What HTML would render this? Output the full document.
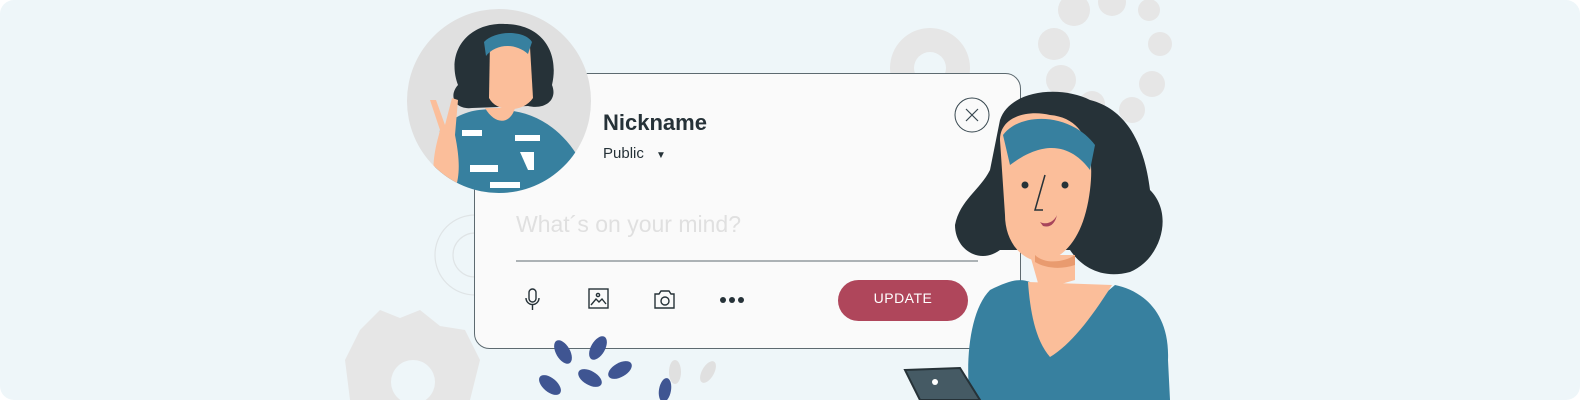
<!DOCTYPE html>
<html><head><meta charset="utf-8"><style>
html,body{margin:0;padding:0;background:#fff;}
.wrap{position:relative;width:1580px;height:400px;overflow:hidden;}
svg{position:absolute;left:0;top:0}
.t{position:absolute;font-family:"Liberation Sans",sans-serif;}
</style></head><body><div class="wrap">
<svg width="1580" height="400" viewBox="0 0 1580 400">
<rect x="0" y="0" width="1580" height="400" rx="14" fill="#eef6f9"/>
<g fill="#e6e6e6">
<circle cx="1074" cy="10" r="16"/><circle cx="1112" cy="2" r="14"/><circle cx="1149" cy="10" r="11"/>
<circle cx="1054" cy="44" r="16"/><circle cx="1160" cy="44" r="12"/>
<circle cx="1061" cy="80" r="15"/><circle cx="1152" cy="84" r="13"/>
<circle cx="1092" cy="104" r="13"/><circle cx="1132" cy="110" r="13"/>
</g>
<g fill="#e6e6e6">
<circle cx="930" cy="68" r="40"/>
<path d="M360 330 L380 310 L400 318 L420 310 L440 326 L465 330 L480 360 L470 400 L350 400 L345 360Z"/>
</g>
<circle cx="930" cy="68" r="16" fill="#eef6f9"/>
<circle cx="413" cy="382" r="22" fill="#eef6f9"/>
<g fill="none" stroke="#dfe4e6" stroke-width="1.2"><circle cx="475" cy="255" r="40"/><circle cx="475" cy="255" r="22"/></g>
<rect x="474.5" y="73.5" width="546" height="275" rx="15" fill="#fafafa" stroke="#5d6a70" stroke-width="1"/>
<line x1="516" y1="261" x2="978" y2="261" stroke="#5d6a70" stroke-width="1"/>
<circle cx="972" cy="115" r="17" fill="none" stroke="#37474f" stroke-width="1"/>
<path d="M966 109l12 12M978 109l-12 12" stroke="#37474f" stroke-width="1.2"/>
<rect x="838" y="280" width="130" height="41" rx="20.5" fill="#af465b"/>
<g fill="none" stroke="#263238" stroke-width="1.4">
<rect x="529" y="289" width="7" height="13" rx="3.5"/><path d="M526 298a6.5 6.5 0 0 0 13 0M532.5 305v5"/>
<rect x="589" y="289" width="19" height="19"/><path d="M591 305l5-6 3 3 3-3 4 5"/><circle cx="598" cy="295" r="1.6"/>
<path d="M655 294h4l2-3h8l2 3h3v14h-19z"/><circle cx="665" cy="301" r="4"/>
</g>
<g fill="#263238"><circle cx="723" cy="300" r="3"/><circle cx="732" cy="300" r="3"/><circle cx="741" cy="300" r="3"/></g>
<circle cx="499" cy="101" r="92" fill="#e0e0e0"/>
<clipPath id="c"><circle cx="499" cy="101" r="92"/></clipPath>
<g clip-path="url(#c)">
<path d="M458 85 C445 50 470 22 505 24 C540 24 560 50 552 85 C558 100 545 110 528 106 L472 108 C455 110 448 96 458 85Z" fill="#263238"/>
<path d="M490 42 C497 32 525 32 530 47 L533 98 C523 113 497 113 489 98Z" fill="#fbbe9a"/>
<path d="M484 42 C495 30 525 30 532 42 L528 54 C515 42 495 44 486 56Z" fill="#37809f"/>
<path d="M440 130 C460 110 480 108 500 110 C530 110 560 125 580 160 L590 200 L430 200Z" fill="#37809f"/>
<path d="M485 108 L515 108 C510 125 495 125 485 108Z" fill="#fbbe9a"/>
<path d="M430 100 L436 100 L445 125 L452 98 L458 100 L455 135 C460 160 460 175 455 190 L435 190 C430 160 438 140 440 130Z" fill="#fbbe9a"/>
<g fill="#fff"><path d="M462 130h20v6h-20z"/><path d="M515 135h25v6h-25z"/><path d="M470 165h28v7h-28z"/><path d="M520 152h14v18h-6z"/><path d="M490 182h30v6h-30z"/></g>
</g>
<path d="M1000 120 C1010 90 1060 85 1090 100 C1130 110 1145 150 1150 190 C1175 215 1160 260 1130 272 C1100 280 1080 265 1070 250 L1000 250 C980 265 955 250 955 225 C960 200 980 190 990 170Z" fill="#263238"/>
<path d="M1000 140 C1000 115 1030 110 1050 115 C1085 118 1095 150 1090 190 C1085 230 1070 255 1045 262 C1020 262 1005 240 1005 215Z" fill="#fbbe9a"/>
<path d="M1003 135 C1020 112 1070 112 1095 145 L1090 170 C1075 150 1050 135 1010 165Z" fill="#37809f"/>
<path d="M1030 255 L1075 255 L1075 280 L1040 290Z" fill="#fbbe9a"/>
<path d="M1035 255 C1045 265 1065 262 1075 255 L1075 265 C1060 270 1045 268 1035 262Z" fill="#e99b6f"/>
<path d="M990 290 C1010 280 1020 278 1030 282 L1050 340 L1115 285 C1140 290 1170 310 1168 360 L1170 400 L970 400 C965 360 970 310 990 290Z" fill="#37809f"/>
<path d="M1028 282 L1112 285 C1090 320 1070 345 1050 357 C1035 340 1030 310 1028 282Z" fill="#fbbe9a"/>
<g fill="#263238"><circle cx="1025" cy="185" r="3.5"/><circle cx="1065" cy="185" r="3.5"/></g>
<path d="M1045 175 L1035 210 L1043 210" fill="none" stroke="#263238" stroke-width="1.5"/>
<path d="M1040 222 C1048 226 1055 220 1057 215 C1055 224 1050 228 1043 226Z" fill="#a8455b"/>
<path d="M905 370 L960 368 L980 400 L920 400Z" fill="#455a64" stroke="#263238" stroke-width="2"/>
<circle cx="935" cy="382" r="3" fill="#fff"/>
<g fill="#3f5592">
<ellipse cx="563" cy="352" rx="7" ry="13" transform="rotate(-30 563 352)"/>
<ellipse cx="598" cy="348" rx="7" ry="13" transform="rotate(30 598 348)"/>
<ellipse cx="620" cy="370" rx="7" ry="13" transform="rotate(60 620 370)"/>
<ellipse cx="590" cy="378" rx="7" ry="13" transform="rotate(-60 590 378)"/>
<ellipse cx="550" cy="385" rx="7" ry="13" transform="rotate(-50 550 385)"/>
<ellipse cx="665" cy="390" rx="6" ry="12" transform="rotate(10 665 390)"/>
</g>
<g fill="#e0e0e0"><ellipse cx="675" cy="372" rx="6" ry="12"/><ellipse cx="708" cy="372" rx="6" ry="12" transform="rotate(30 708 372)"/></g>
</svg>
<div class="t" style="left:603px;top:110px;font-size:22px;font-weight:bold;color:#263238;">Nickname</div>
<div class="t" style="left:603px;top:145px;font-size:15px;color:#263238;">Public <span style="font-size:10px;margin-left:8px">&#9660;</span></div>
<div class="t" style="left:516px;top:211px;font-size:23px;color:#e0e0e0;">What´s on your mind?</div>
<div class="t" style="left:838px;top:290px;width:130px;text-align:center;font-size:14px;color:#fff;letter-spacing:0.5px">UPDATE</div>
</div></body></html>
